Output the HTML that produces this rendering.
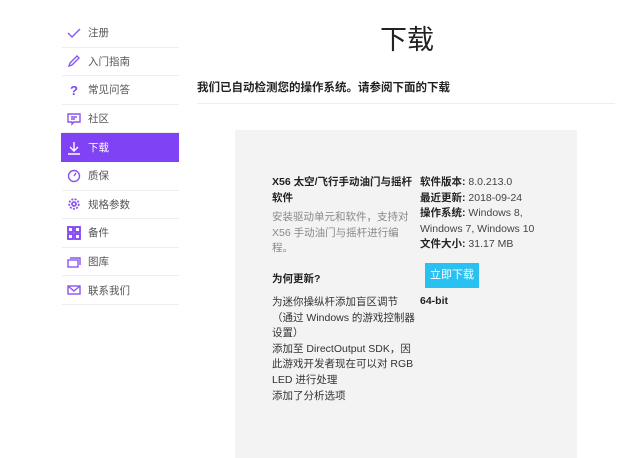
<!DOCTYPE html>
<html><head><meta charset="utf-8"><style>
*{margin:0;padding:0;box-sizing:border-box}
body{width:640px;height:458px;background:#fff;font-family:"Liberation Sans","Noto Sans CJK SC",sans-serif;position:relative;overflow:hidden;color:#333}
.nav{position:absolute;left:62px;top:19px;width:117px}
.it{height:28.6px;border-bottom:1px solid #eee;display:flex;align-items:center;font-size:10.5px;color:#555;padding-left:5px}
.it svg{width:14px;height:14px;margin-right:7px;flex:none}
.it.on{background:#7f42f5;color:#fff;margin-left:-1px;padding-left:6px;border-bottom:none}
.a{position:absolute;white-space:nowrap}
.sm{font-size:10.5px;line-height:15.6px}
</style></head><body>
<div class="nav">
<div class="it"><svg viewBox="0 0 14 14" fill="none" stroke="#8a55f0" stroke-width="1.4"><path d="M1 7l4 4 8-8"/></svg>注册</div>
<div class="it"><svg viewBox="0 0 14 14" fill="none" stroke="#8a55f0" stroke-width="1.4"><path d="M2 12l1-3 7-7 2 2-7 7z"/></svg>入门指南</div>
<div class="it"><svg viewBox="0 0 14 14"><text x="3" y="12" font-size="13" font-weight="bold" fill="#7f42f5" font-family="Liberation Sans">?</text></svg>常见问答</div>
<div class="it"><svg viewBox="0 0 14 14" fill="none" stroke="#8a55f0" stroke-width="1.4"><path d="M1 2h12v8H7l-2 2v-2H1z M4 5h6M4 7h4"/></svg>社区</div>
<div class="it on"><svg viewBox="0 0 14 14" fill="none" stroke="#fff" stroke-width="1.4"><path d="M7 1v9M3 6l4 4 4-4M1 13h12"/></svg>下载</div>
<div class="it"><svg viewBox="0 0 14 14" fill="none" stroke="#8a55f0" stroke-width="1.4"><circle cx="7" cy="7" r="5.5"/><path d="M7 7l2-3"/></svg>质保</div>
<div class="it"><svg viewBox="0 0 14 14" fill="none" stroke="#8a55f0" stroke-width="1.8"><circle cx="7" cy="7" r="4.8" stroke-dasharray="2 1.3"/><circle cx="7" cy="7" r="2"/></svg>规格参数</div>
<div class="it"><svg viewBox="0 0 14 14" fill="none" stroke="#7f42f5" stroke-width="1.8"><rect x="1" y="1" width="5" height="5"/><rect x="8" y="1" width="5" height="5"/><rect x="1" y="8" width="5" height="5"/><rect x="8" y="8" width="5" height="5"/></svg>备件</div>
<div class="it"><svg viewBox="0 0 14 14" fill="none" stroke="#8a55f0" stroke-width="1.4"><rect x="1" y="5" width="10" height="7"/><path d="M3 3h10v7"/></svg>图库</div>
<div class="it"><svg viewBox="0 0 14 14" fill="none" stroke="#8a55f0" stroke-width="1.4"><rect x="1" y="3" width="12" height="8"/><path d="M1 3l6 5 6-5"/></svg>联系我们</div>
</div>
<div class="a" style="left:380px;top:18px;font-size:27px;color:#222">下载</div>
<div class="a" style="left:197px;top:79px;font-size:11.5px;font-weight:bold;color:#222">我们已自动检测您的操作系统。请参阅下面的下载</div>
<div class="a" style="left:197px;top:103px;width:418px;height:1px;background:#eee"></div>
<div class="a" style="left:235px;top:130px;width:342px;height:328px;background:#f3f3f3"></div>
<div class="a sm" style="left:272px;top:175px;font-weight:bold;color:#222">X56 太空/飞行手动油门与摇杆<br>软件</div>
<div class="a sm" style="left:272px;top:210px;color:#888">安装驱动单元和软件，支持对<br>X56 手动油门与摇杆进行编<br>程。</div>
<div class="a sm" style="left:272px;top:272px;font-weight:bold;color:#222">为何更新?</div>
<div class="a sm" style="left:272px;top:295px;color:#333">为迷你操纵杆添加盲区调节<br>（通过 Windows 的游戏控制器<br>设置）<br>添加至 DirectOutput SDK，因<br>此游戏开发者现在可以对 RGB<br>LED 进行处理<br>添加了分析选项</div>
<div class="a sm" style="left:420px;top:175px;color:#444"><b style="color:#222">软件版本:</b> 8.0.213.0<br><b style="color:#222">最近更新:</b> 2018-09-24<br><b style="color:#222">操作系统:</b> Windows 8,<br>Windows 7, Windows 10<br><b style="color:#222">文件大小:</b> 31.17 MB</div>
<div class="a" style="left:425px;top:263px;width:54px;height:25px;background:#29c1f2;color:#fff;font-size:11px;line-height:25px;text-align:center">立即下载</div>
<div class="a sm" style="left:420px;top:294px;font-weight:bold;color:#222">64-bit</div>
</body></html>
